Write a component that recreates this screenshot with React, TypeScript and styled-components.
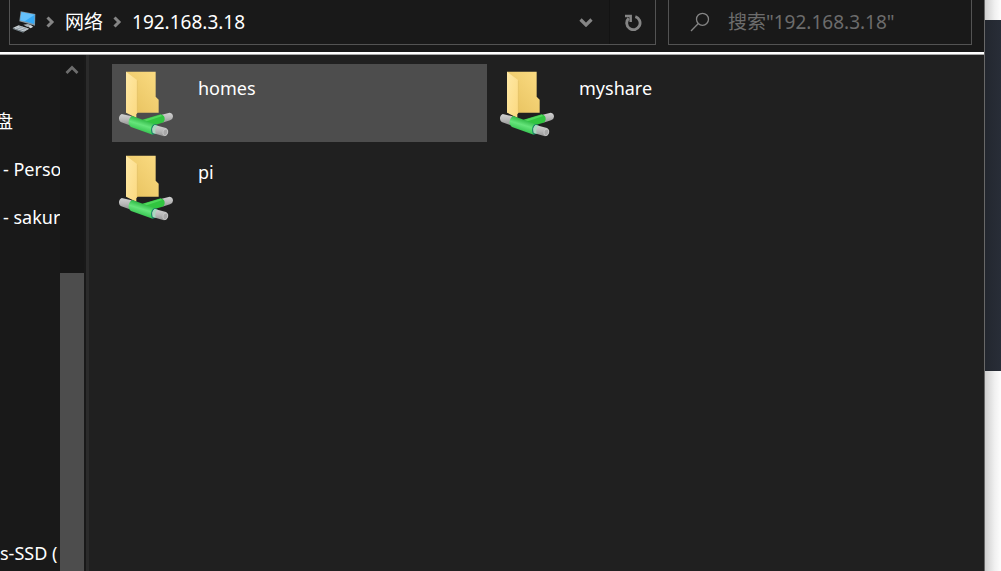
import React from "react";
import styled, { createGlobalStyle } from "styled-components";

const GlobalStyle = createGlobalStyle`
  *, *::before, *::after { box-sizing: border-box; }
  body {
    margin: 0;
    background: #191919;
    color: #fff;
    font-family: "Noto Sans", "Noto Sans CJK SC", sans-serif;
    font-size: 18px;
    line-height: 24px;
  }
  button {
    border: 0;
    padding: 0;
    background: none;
    color: inherit;
    font: inherit;
    cursor: pointer;
  }
  svg { display: block; flex: none; }
`;

const Desktop = styled.div`
  display: flex;
  height: 100vh;
  overflow: hidden;
`;

const ExplorerWindow = styled.main`
  flex: 1;
  min-width: 0;
  display: flex;
  flex-direction: column;
  border-right: 1px solid #686868;
`;

const Backdrop = styled.div`
  flex: none;
  width: 16px;
  display: flex;
  flex-direction: column;
  background: linear-gradient(to right, #cecece, #f0f0f0 60%, #fdfdfd);
`;

const BackdropPanel = styled.div`
  height: 351px;
  margin-top: 20px;
  background: linear-gradient(to right, #23272f, #282d37);
`;

const Toolbar = styled.header`
  display: flex;
  gap: 12px;
  padding: 0 12px 7px 9px;
  background: #191919;
  font-size: 19px;
`;

const Box = styled.div`
  display: flex;
  align-items: center;
  height: 45px;
  border: 1px solid #535353;
  border-top: 0;
`;

const AddressBar = styled(Box)`
  flex: 1;
  min-width: 0;
  padding-left: 2px;
`;

const Crumbs = styled.nav`
  flex: 1;
  display: flex;
  align-items: center;
  gap: 10px;
`;

const Crumb = styled.button`
  white-space: nowrap;
`;

const DropButton = styled.button`
  display: flex;
  align-items: center;
  justify-content: center;
  width: 46px;
  height: 44px;
`;

const RefreshButton = styled(DropButton)`
  border-left: 1px solid #131313;
`;

const SearchBox = styled(Box).attrs({ as: "label" })`
  width: 304px;
  padding: 0 12px 0 21px;
  gap: 18px;
`;

const SearchInput = styled.input`
  flex: 1;
  min-width: 0;
  padding: 0;
  border: 0;
  outline: 0;
  background: none;
  color: #fff;
  font: inherit;
  &::placeholder { color: #6c6c6c; opacity: 1; }
`;

const Rule = styled.div`
  flex: none;
  height: 3px;
  background: #fff;
  border-bottom: 1px solid #a8a8a8;
`;

const Body = styled.div`
  flex: 1;
  min-height: 0;
  display: flex;
`;

const Sidebar = styled.aside`
  flex: none;
  width: 89px;
  display: flex;
  background: #191919;
  border-right: 3px solid #2b2b2b;
`;

const Tree = styled.ul`
  flex: 1;
  min-width: 0;
  display: grid;
  grid-auto-rows: 48px;
  align-items: center;
  margin: 0;
  padding: 42px 0 0;
  list-style: none;
  overflow: hidden;
  white-space: nowrap;
`;

const TreeItem = styled.li<{ $row: number; $shift: number }>`
  grid-row: ${(p) => p.$row};
  margin-left: ${(p) => p.$shift}px;
`;

const Scrollbar = styled.div`
  width: 24px;
  margin-right: 2px;
  display: flex;
  flex-direction: column;
  background: #171717;
`;

const ScrollUp = styled.button`
  display: flex;
  justify-content: center;
  padding-top: 10px;
  height: 24px;
`;

const Thumb = styled.div`
  flex: 1;
  margin-top: 194px;
  background: #4d4d4d;
`;

const Files = styled.section`
  flex: 1;
  min-width: 0;
  display: grid;
  grid-template-columns: repeat(auto-fill, 375px);
  grid-auto-rows: 78px;
  gap: 6px;
  padding: 9px 0 0 23px;
  background: #202020;
`;

const Tile = styled.button<{ $active?: boolean }>`
  display: flex;
  align-items: flex-start;
  gap: 25px;
  padding: 7px;
  text-align: left;
  background: ${(p) => (p.$active ? "#4d4d4d" : "transparent")};
`;

const TileName = styled.span`
  padding-top: 5px;
`;

const ComputerIcon = () => (
  <svg width="24" height="22" viewBox="0 0 72 66" aria-hidden="true">
    <path d="M26 1 70 9 69 44 22 31z" fill="#8798a3" />
    <path d="M28 4 68 11 67 39 25 28z" fill="#35a9f5" />
    <path d="M28 4 68 11 38 31 25 28z" fill="#65c1fb" />
    <path d="M34 41 48 39 60 43 46 48z" fill="#aab5bb" />
    <path d="M2 51 20 43 52 53 36 62z" fill="#c9d1d5" />
    <path d="M2 51 36 62 34 65 3 54z" fill="#7e8b92" />
    <path d="M12 50 40 58M20 46 46 55M14 56 32 46M25 59 43 50" stroke="#8f9ca4" strokeWidth="2" />
    <path d="M48 47 56 43 64 47 56 52z" fill="#d3dade" />
  </svg>
);

const Chevron = ({ dir }: { dir: "right" | "down" | "up" }) => {
  if (dir === "right")
    return (
      <svg width="9" height="12" viewBox="0 0 9 12" fill="none" stroke="#858585" strokeWidth="3" aria-hidden="true">
        <path d="M1.500 1.500 6 6 1.500 10.500" />
      </svg>
    );
  return (
    <svg width="14" height="10" viewBox="0 0 14 10" fill="none" stroke={dir === "up" ? "#6d6d6d" : "#858585"} strokeWidth={dir === "up" ? 2.8 : 3.2} aria-hidden="true">
      <path d={dir === "up" ? "M1.5 8 7 2.5 12.5 8" : "M1.5 2.5 7 8 12.5 2.5"} />
    </svg>
  );
};

const RefreshIcon = () => (
  <svg width="18" height="18" viewBox="0 0 54 54" fill="none" stroke="#858585" strokeWidth="8.500" aria-hidden="true">
    <path d="M34 11A20 20 0 1 1 14 16" />
    <path d="M3 9H20V27" strokeWidth="7.500" />
  </svg>
);

const SearchIcon = () => (
  <svg width="20" height="20" viewBox="0 0 20 20" fill="none" stroke="#858585" strokeWidth="1.3" aria-hidden="true">
    <circle cx="12.500" cy="7.300" r="6" />
    <path d="M8.300 11.500 1 19" />
  </svg>
);

const NetworkFolderIcon = () => (
  <svg width="54" height="66" viewBox="42 48 162 198" aria-hidden="true">
    <defs>
      <linearGradient id="back" x1="0" x2="1" y1="1" y2="0">
        <stop offset="0" stopColor="#e6c05c" />
        <stop offset="1" stopColor="#fbdc83" />
      </linearGradient>
      <linearGradient id="leaf" x1="0" x2="1" y1="0" y2="1">
        <stop offset="0" stopColor="#ffe9a6" />
        <stop offset="1" stopColor="#fbd980" />
      </linearGradient>
      <linearGradient id="green" gradientUnits="userSpaceOnUse" x1="115" y1="195" x2="105" y2="228">
        <stop offset="0" stopColor="#35bd4b" />
        <stop offset="0.450" stopColor="#66e57b" />
        <stop offset="1" stopColor="#38c552" />
      </linearGradient>
      <linearGradient id="metal" x1="0" x2="0" y1="0" y2="1">
        <stop offset="0" stopColor="#d2d2d2" />
        <stop offset="0.500" stopColor="#b9b9b9" />
        <stop offset="1" stopColor="#959595" />
      </linearGradient>
    </defs>
    <path d="M63 50H152V125L161 134V173H90L63 150z" fill="url(#back)" />
    <path d="M63 50 97 76V174L94 178V188L63 173z" fill="url(#leaf)" />
    <path d="M97 76V173" stroke="#d9b75c" strokeWidth="1.500" />
    <path d="M170 179 194 173Q204 174 204 185 203 194 195 196L172 203z" fill="url(#metal)" />
    <path d="M112 194 167 178Q180 181 179 194 178 201 170 204L134 214z" fill="#31c540" />
    <path d="M114 195 167 179 172 183 125 199z" fill="#51d75c" />
    <path d="M50 177 80 184 72 210 47 201Q41 196 42 187 44 179 50 177z" fill="url(#metal)" />
    <path d="M82 183 151 208Q138 216 143 239L78 216Q69 210 71 199 73 187 82 183z" fill="url(#green)" />
    <path d="M151 207Q139 209 138 225 138 235 143 239L152 236 158 211z" fill="#168d66" />
    <path d="M149 210 183 219Q191 224 189 233 186 242 177 244L143 234Q138 218 149 210z" fill="url(#metal)" />
    <ellipse cx="181" cy="232" rx="7" ry="10" transform="rotate(15 181 232)" fill="#a7a7a7" stroke="#d0d0d0" strokeWidth="2" />
    <path d="M149 211Q140 219 144 233L152 236Q148 222 156 213z" fill="#a9dac0" />
  </svg>
);

const folders = [{ name: "homes", active: true }, { name: "myshare" }, { name: "pi" }];

const treeItems = [
  { label: "盘", row: 1, shift: -5 },
  { label: "- Perso", row: 2, shift: 3 },
  { label: "- sakur", row: 3, shift: 3 },
  { label: "s-SSD (", row: 10, shift: 0 },
];

export default function App() {
  return (
    <>
      <GlobalStyle />
      <Desktop>
        <ExplorerWindow>
          <Toolbar>
            <AddressBar>
              <Crumbs>
                <ComputerIcon />
                <Chevron dir="right" />
                <Crumb>网络</Crumb>
                <Chevron dir="right" />
                <Crumb>192.168.3.18</Crumb>
              </Crumbs>
              <DropButton aria-label="历史记录">
                <Chevron dir="down" />
              </DropButton>
              <RefreshButton aria-label="刷新">
                <RefreshIcon />
              </RefreshButton>
            </AddressBar>
            <SearchBox>
              <SearchIcon />
              <SearchInput aria-label="搜索" placeholder={'搜索"192.168.3.18"'} />
            </SearchBox>
          </Toolbar>
          <Rule />
          <Body>
            <Sidebar>
              <Tree>
                {treeItems.map((item) => (
                  <TreeItem key={item.label} $row={item.row} $shift={item.shift}>
                    {item.label}
                  </TreeItem>
                ))}
              </Tree>
              <Scrollbar>
                <ScrollUp aria-label="向上滚动">
                  <Chevron dir="up" />
                </ScrollUp>
                <Thumb />
              </Scrollbar>
            </Sidebar>
            <Files>
              {folders.map((f) => (
                <Tile key={f.name} $active={f.active}>
                  <NetworkFolderIcon />
                  <TileName>{f.name}</TileName>
                </Tile>
              ))}
            </Files>
          </Body>
        </ExplorerWindow>
        <Backdrop>
          <BackdropPanel />
        </Backdrop>
      </Desktop>
    </>
  );
}
